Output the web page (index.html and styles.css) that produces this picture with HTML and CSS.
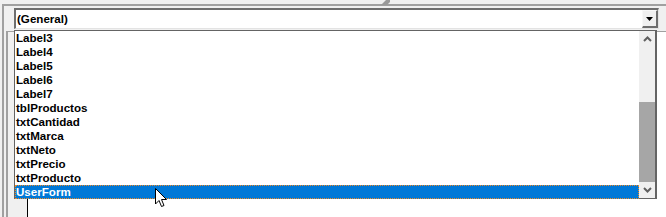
FILE: index.html
```html
<!DOCTYPE html>
<html>
<head>
<meta charset="utf-8">
<link rel="stylesheet" href="styles.css">
</head>
<body>
<div class="window">
  <svg class="grip" width="14" height="5" viewBox="0 0 14 5"><polygon points="4,5 9,0 13,0 13,2 10,5" fill="#9a9a9a"/></svg>
  <div class="combo-row">
    <div class="combo">
      <span class="combo-text">(General)</span>
      <span class="combo-btn"><svg width="7" height="4" viewBox="0 0 7 4"><polygon points="0,0 7,0 3.5,4" fill="#000"/></svg></span>
    </div>
    <div class="side-stub"></div>
  </div>
  <div class="pane">
    <div class="gutter"></div>
    <div class="editor"></div>
    <div class="dropdown">
      <ul class="items">
        <li>Label3</li>
        <li>Label4</li>
        <li>Label5</li>
        <li>Label6</li>
        <li>Label7</li>
        <li>tblProductos</li>
        <li>txtCantidad</li>
        <li>txtMarca</li>
        <li>txtNeto</li>
        <li>txtPrecio</li>
        <li>txtProducto</li>
        <li class="selected">UserForm</li>
      </ul>
      <div class="scrollbar">
        <div class="sb-btn"><svg width="9" height="6" viewBox="0 0 9 6"><polyline points="1,5 4.5,1.5 8,5" fill="none" stroke="#606060" stroke-width="2"/></svg></div>
        <div class="sb-track"><div class="sb-space"></div><div class="sb-thumb"></div></div>
        <div class="sb-btn"><svg width="9" height="6" viewBox="0 0 9 6"><polyline points="1,1 4.5,4.5 8,1" fill="none" stroke="#606060" stroke-width="2"/></svg></div>
      </div>
    </div>
    <svg class="cursor" width="13" height="20" viewBox="0 0 13 20"><path d="M0.5,0.5 L0.5,16 L4,12.5 L6.5,18.5 L9,17.5 L6.5,11.5 L11.5,11.5 Z" fill="#fff" stroke="#000" stroke-width="1" stroke-linejoin="miter"/></svg>
  </div>
</div>
</body>
</html>
```
FILE: styles.css
```css
html, body {
  margin: 0;
  padding: 0;
  background: #f0f0f0;
  width: 666px;
  height: 217px;
  overflow: hidden;
  font-family: "Liberation Sans", Arial, sans-serif;
  font-weight: bold;
  font-size: 11.6px;
  color: #000;
}

.window {
  position: relative;
  margin: 4px 0 0 2px;
  height: 213px;
  border-top: 2px solid #a0a0a0;
  border-left: 2px solid #a0a0a0;
  box-sizing: border-box;
  display: flex;
  flex-direction: column;
}

.grip {
  position: absolute;
  left: 373px;
  top: -6px;
}

.combo-row {
  display: flex;
  align-items: flex-start;
  padding: 2px 0 0 10px;
  height: 23px;
  box-sizing: border-box;
  flex: none;
}

.combo {
  width: 645px;
  height: 21px;
  box-sizing: border-box;
  background: #fff;
  border-top: 2px solid #6e6e6e;
  border-left: 2px solid #6e6e6e;
  border-right: 1px solid #e3e3e3;
  border-bottom: 1px solid #e3e3e3;
  display: flex;
  align-items: center;
  justify-content: space-between;
}

.combo-text {
  padding-left: 1px;
  line-height: 14px;
}

.combo-btn {
  width: 16px;
  height: 18px;
  box-sizing: border-box;
  background: #f0f0f0;
  border-top: 1px solid #f8f8f8;
  border-left: 1px solid #f8f8f8;
  border-right: 2px solid #6e6e6e;
  border-bottom: 2px solid #6e6e6e;
  display: flex;
  align-items: center;
  justify-content: center;
  align-self: flex-start;
}

.side-stub {
  flex: 1;
}

.pane {
  position: relative;
  display: flex;
  margin-top: 2px;
  margin-left: 2px;
  flex: 1;
  border-top: 1px solid #a0a0a0;
  border-left: 2px solid #a0a0a0;
  box-sizing: border-box;
}

.gutter {
  width: 19px;
  background: #f0f0f0;
  border-right: 1px solid #000;
}

.editor {
  flex: 1;
  background: #fff;
}

.dropdown {
  position: absolute;
  left: 6px;
  top: -2px;
  width: 643px;
  height: 169px;
  box-sizing: border-box;
  background: #fff;
  border-top: 1px solid #646464;
  border-left: 1px solid #646464;
  border-right: 2px solid #646464;
  display: flex;
}

.items {
  flex: 1;
  list-style: none;
  margin: 0;
  padding: 0;
}

.items li {
  height: 14px;
  line-height: 14px;
  padding-left: 1px;
  white-space: nowrap;
  box-sizing: border-box;
}

.items li.selected {
  background: #0078d7;
  color: #fff;
  border: 1px dotted #f08a24;
  line-height: 12px;
  padding-left: 0;
}

.scrollbar {
  width: 16px;
  display: flex;
  flex-direction: column;
  background: #f0f0f0;
  border-bottom: 1px solid #646464;
}

.sb-btn {
  height: 16px;
  display: flex;
  align-items: center;
  justify-content: center;
}

.sb-track {
  flex: 1;
  display: flex;
  flex-direction: column;
}

.sb-space {
  height: 55px;
}

.sb-thumb {
  flex: 1;
  background: #a6a6a6;
}

.cursor {
  position: absolute;
  left: 147px;
  top: 156px;
}
```
